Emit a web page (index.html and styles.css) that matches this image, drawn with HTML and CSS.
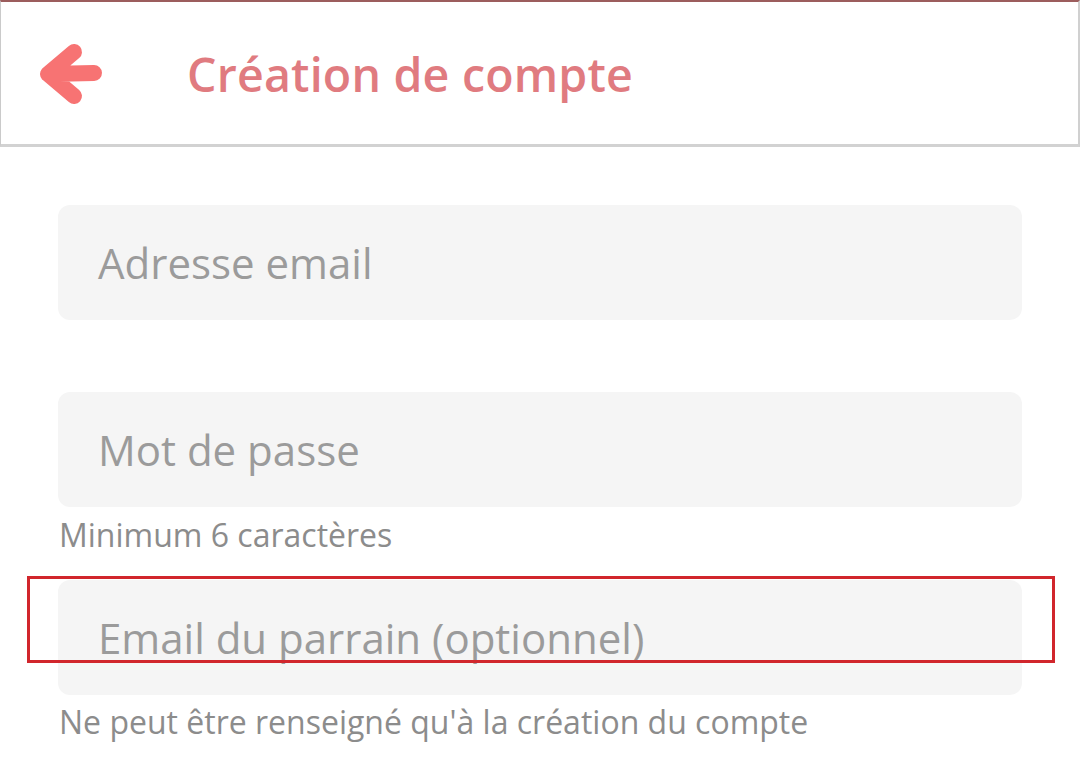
FILE: index.html
```html
<!DOCTYPE html>
<html lang="fr">
<head>
<meta charset="utf-8">
<title>Création de compte</title>
<link rel="stylesheet" href="styles.css">
</head>
<body>
<header class="topbar">
  <svg class="back" width="70" height="70" viewBox="0 0 70 70" aria-hidden="true">
    <path d="M38 14 L12 36 L38 58 M12 36 L58 35" fill="none" stroke="#f77373" stroke-width="16" stroke-linecap="round" stroke-linejoin="round"/>
  </svg>
  <h1 class="title">Création de compte</h1>
</header>
<main class="form">
  <div class="field field-first">Adresse email</div>
  <div class="field">Mot de passe</div>
  <p class="hint hint-first">Minimum 6 caractères</p>
  <div class="field">Email du parrain (optionnel)</div>
  <p class="hint">Ne peut être renseigné qu'à la création du compte</p>
</main>
<div class="highlight"></div>
</body>
</html>
```
FILE: styles.css
```css
html, body {
  margin: 0;
  padding: 0;
  background: #ffffff;
}
body {
  width: 1080px;
  height: 760px;
  overflow: hidden;
  position: relative;
  font-family: "Open Sans", "Noto Sans", sans-serif;
}
.topbar {
  box-sizing: border-box;
  height: 147px;
  display: flex;
  align-items: center;
  border-top: 2px solid #9c5d5d;
  border-left: 1px solid #cacaca;
  border-right: 2px solid #d0d0d0;
  border-bottom: 3px solid #d2d2d2;
}
.back {
  display: block;
  margin-left: 35px;
  flex: none;
}
.title {
  margin: 2px 0 0 81px;
  font-size: 46.5px;
  font-weight: 600;
  color: #e07b80;
  letter-spacing: 0.2px;
}
.form {
  padding: 58px 58px 0 58px;
  display: flex;
  flex-direction: column;
}
.field {
  box-sizing: border-box;
  height: 115px;
  border-radius: 12px;
  background: #f5f5f5;
  padding-left: 40px;
  display: flex;
  align-items: center;
  font-size: 42px;
  color: #9b9b9b;
}
.field-first {
  margin-bottom: 72px;
}
.hint {
  margin: 5px 0 0 1px;
  font-size: 32px;
  line-height: 44px;
  color: #8c8c8c;
}
.hint-first {
  margin-top: 6px;
  margin-bottom: 23px;
}
.highlight {
  position: absolute;
  left: 27px;
  top: 576px;
  width: 1028px;
  height: 87px;
  box-sizing: border-box;
  border: 3px solid #d1262c;
}
```
